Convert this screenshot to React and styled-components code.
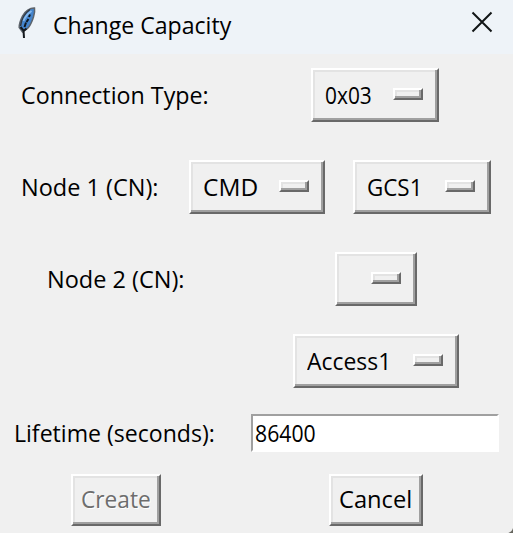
import React, { useLayoutEffect, useRef, useState } from "react";
import styled, { createGlobalStyle } from "styled-components";

const GlobalStyle = createGlobalStyle`
  * { box-sizing: border-box; }
  body { margin: 0; background: #f0f0f0; overflow: hidden; }
`;

const Dialog = styled.main`
  position: relative;
  width: 513px;
  height: 533px;
  overflow: hidden;
  background: #f0f0f0;
  color: #000;
  font: 24px/32px "Open Sans", "Noto Sans", sans-serif;
`;

const TitleBar = styled.header`
  display: flex;
  height: 54px;
  padding-left: 17px;
  background: #eef3f8;
`;

const Feather = styled.svg`
  width: 20px;
  height: 32px;
  margin: 7px 16px 0 0;
`;

const Title = styled.h1`
  margin: 9px 0 0;
  font: inherit;
`;

const CloseButton = styled.button`
  width: 22px;
  height: 22px;
  margin: 11px 20px 0 auto;
  padding: 0;
  border: 0;
  background: none;
  svg { display: block; }
`;

const Row = styled.div`
  display: flex;
  align-items: flex-start;
  height: ${(p) => p.$height}px;
  padding-left: ${(p) => p.$indent}px;
`;

const Label = styled.div`
  flex: none;
  width: ${(p) => p.$column}px;
  padding-top: ${(p) => p.$top ?? 11}px;
`;

const Raised = styled.button`
  flex: none;
  display: flex;
  width: ${(p) => p.$width}px;
  height: ${(p) => p.$height || 54}px;
  margin: 0 ${(p) => p.$gap || 0}px 0 0;
  padding: ${(p) => p.$top ?? 9}px 0 0 ${(p) => p.$pad || 12}px;
  border: 2px solid;
  border-color: #fff #696969 #696969 #fff;
  box-shadow: inset -2px -2px #a0a0a0, inset 2px 2px #e3e3e3;
  background: #f0f0f0;
  color: #000;
  font: inherit;
  text-align: left;
  &:disabled {
    color: #6d6d6d;
    text-shadow: 1px 1px #fff;
  }
`;

const Indicator = styled.span`
  width: 30px;
  height: 12px;
  margin: 9px 14px 0 auto;
  border: 2px solid;
  border-color: #fff #696969 #696969 #fff;
  box-shadow: inset -2px -2px #a0a0a0, inset 2px 2px #e3e3e3;
`;

const Entry = styled.div`
  width: 248px;
  height: 38px;
  padding: 1px 0 0 2px;
  border: 2px solid;
  border-color: #a0a0a0 #fff #fff #a0a0a0;
  background: #fff;
`;

const Fitted = styled.span`
  display: block;
  width: ${(p) => p.$width}px;
  white-space: nowrap;
  span {
    display: inline-block;
    transform-origin: 0 50%;
  }
`;

const Corner = styled.svg`
  position: absolute;
  right: 0;
  bottom: 0;
`;

function FitText({ width, children }) {
  const ref = useRef(null);
  const [scale, setScale] = useState(1);
  useLayoutEffect(() => {
    setScale(width / ref.current.offsetWidth);
  }, [width, children]);
  return (
    <Fitted $width={width}>
      <span ref={ref} style={{ transform: `scaleX(${scale})` }}>{children}</span>
    </Fitted>
  );
}

function OptionMenu({ text, textWidth, width, gap }) {
  return (
    <Raised $width={width} $gap={gap}>
      {text && <FitText width={textWidth}>{text}</FitText>}
      <Indicator />
    </Raised>
  );
}

export default function App() {
  return (
    <>
      <GlobalStyle />
      <Dialog>
        <TitleBar>
          <Feather viewBox="0 0 20 32">
            <path d="M17.500 1C13 .8 8 4 5.500 9C3.500 13 2 17 2.200 20.500L5.500 25L10.500 21.500C14 18 15 14 16.500 10C17.500 7 18 4 17.500 1Z" fill="#4484cc" stroke="#5d646c" strokeWidth="1.500" />
            <path d="M13 2.500C8 6 4.500 12 3.500 19" fill="none" stroke="#343a42" strokeWidth="1.500" />
            <path d="M14.500 4C11 6.500 8 10 6.500 14" fill="none" stroke="#86b9ee" strokeWidth="1.800" />
            <path d="M13 7.500L12 10M11.500 12L9.500 15M9 15.500L7.500 20" fill="none" stroke="#101820" strokeWidth="2" />
            <path d="M3.500 20L6.500 23.500L7 31M6.500 24L9.500 21.500" fill="none" stroke="#15191e" strokeWidth="2" />
          </Feather>
          <Title><FitText width={178}>Change Capacity</FitText></Title>
          <CloseButton aria-label="Close">
            <svg width="22" height="22" viewBox="0 0 22 22">
              <path d="M1.500 1.500L20.500 20.500M20.500 1.500L1.500 20.500" stroke="#111416" strokeWidth="2" />
            </svg>
          </CloseButton>
        </TitleBar>
        <Row $height={14} />
        <Row $height={92} $indent={21}>
          <Label $column={290}><FitText width={188}>Connection Type:</FitText></Label>
          <OptionMenu text="0x03" textWidth={47} width={128} />
        </Row>
        <Row $height={92} $indent={21}>
          <Label $column={168}><FitText width={138}>Node 1 (CN):</FitText></Label>
          <OptionMenu text="CMD" textWidth={55} width={136} gap={28} />
          <OptionMenu text="GCS1" textWidth={55} width={138} />
        </Row>
        <Row $height={82} $indent={47}>
          <Label $column={288}><FitText width={138}>Node 2 (CN):</FitText></Label>
          <OptionMenu width={82} />
        </Row>
        <Row $height={80} $indent={293}>
          <OptionMenu text="Access1" textWidth={84} width={166} />
        </Row>
        <Row $height={60} $indent={14}>
          <Label $column={237} $top={3}><FitText width={201}>Lifetime (seconds):</FitText></Label>
          <Entry><FitText width={61}>86400</FitText></Entry>
        </Row>
        <Row $height={52} $indent={71}>
          <Raised disabled $width={90} $height={52} $gap={168} $pad={8} $top={7}>
            <FitText width={70}>Create</FitText>
          </Raised>
          <Raised $width={94} $height={52} $pad={8} $top={7}>
            <FitText width={73}>Cancel</FitText>
          </Raised>
        </Row>
        <Corner width="5" height="5" viewBox="0 0 5 5">
          <path d="M5 0V5H0Q4 4 5 0Z" fill="#66665f" />
        </Corner>
      </Dialog>
    </>
  );
}
